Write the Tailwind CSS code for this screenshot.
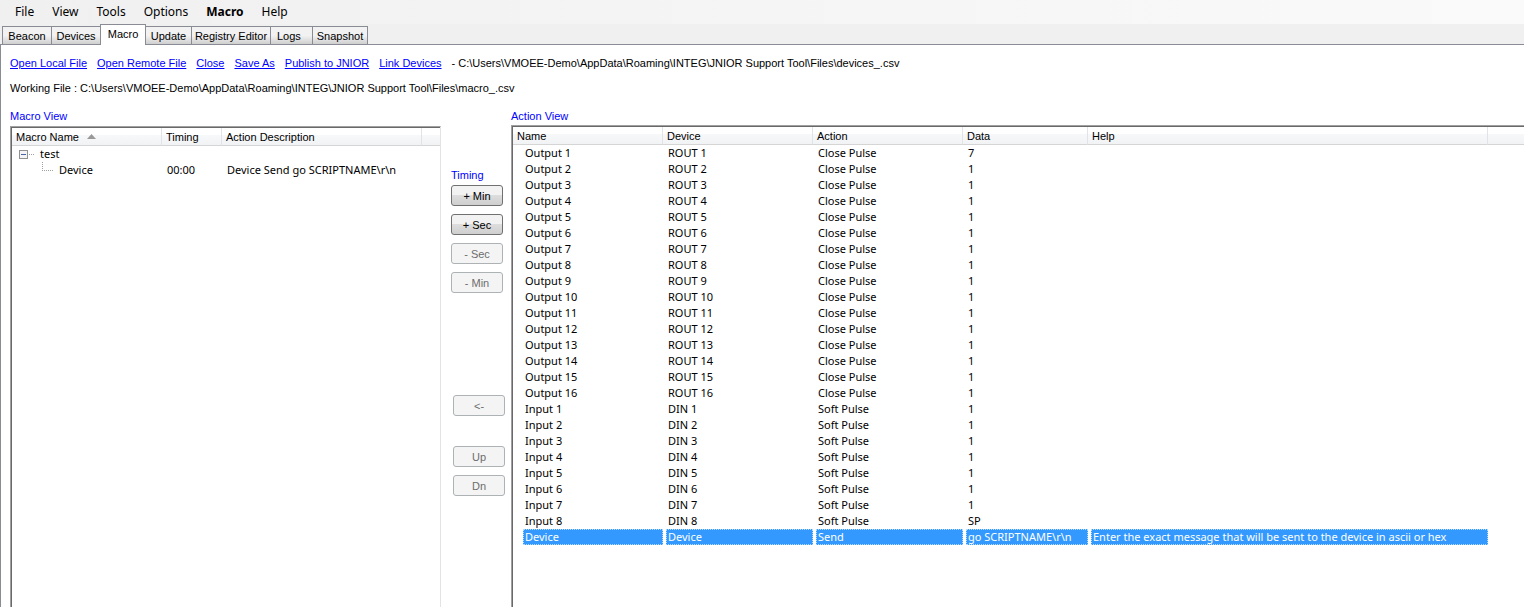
<!DOCTYPE html>
<html lang="en">
<head>
  <meta charset="UTF-8" />
  <meta name="viewport" content="width=device-width, initial-scale=1.0"/>
  <title>JNIOR Support Tool</title>
  <script src="https://cdn.jsdelivr.net/npm/@tailwindcss/browser@4"></script>
</head>
<body class="flex min-h-screen flex-col bg-[#f0f0f0] font-['Liberation_Sans',Arial,sans-serif] text-[11px] leading-4 text-black">

  <!-- Menu bar -->
  <nav class="flex h-6 items-center gap-[18px] bg-linear-to-r from-[#f0f0f0] to-[#fafafa] pl-[15px] font-['Noto_Sans',sans-serif] text-xs">
    <button>File</button>
    <button>View</button>
    <button>Tools</button>
    <button>Options</button>
    <button class="font-bold">Macro</button>
    <button>Help</button>
  </nav>

  <!-- Tabs -->
  <div class="flex h-[21px] items-end border-b border-[#898c95] pl-[2px]" role="tablist">
    <button role="tab" class="h-[18px] w-[50px] border border-b-0 border-[#898c95] bg-linear-to-b from-[#f2f2f2] from-50% to-[#cfcfcf]">Beacon</button>
    <button role="tab" class="h-[18px] w-12 border border-x-0 border-b-0 border-[#898c95] bg-linear-to-b from-[#f2f2f2] from-50% to-[#cfcfcf]">Devices</button>
    <button role="tab" aria-selected="true" class="-mb-px h-[21px] w-[46px] border border-b-0 border-[#898c95] bg-white pb-[2px]">Macro</button>
    <button role="tab" class="h-[18px] w-[46px] border border-b-0 border-l-0 border-[#898c95] bg-linear-to-b from-[#f2f2f2] from-50% to-[#cfcfcf]">Update</button>
    <button role="tab" class="h-[18px] w-[79px] border border-b-0 border-l-0 border-[#898c95] bg-linear-to-b from-[#f2f2f2] from-50% to-[#cfcfcf]">Registry Editor</button>
    <button role="tab" class="h-[18px] w-[42px] border border-b-0 border-l-0 border-[#898c95] bg-linear-to-b from-[#f2f2f2] from-50% to-[#cfcfcf] pl-[6px] text-left">Logs</button>
    <button role="tab" class="h-[18px] w-[55px] border border-b-0 border-l-0 border-[#898c95] bg-linear-to-b from-[#f2f2f2] from-50% to-[#cfcfcf]">Snapshot</button>
  </div>

  <main class="flex flex-1 flex-col border-l border-[#898c95] bg-white">
    <div class="flex gap-[10px] pt-[10px] pl-[9px] whitespace-nowrap">
      <a href="#" class="text-[#0000ff] underline">Open Local File</a>
      <a href="#" class="text-[#0000ff] underline">Open Remote File</a>
      <a href="#" class="text-[#0000ff] underline">Close</a>
      <a href="#" class="text-[#0000ff] underline">Save As</a>
      <a href="#" class="text-[#0000ff] underline">Publish to JNIOR</a>
      <a href="#" class="text-[#0000ff] underline">Link Devices</a>
      <span>- C:\Users\VMOEE-Demo\AppData\Roaming\INTEG\JNIOR Support Tool\Files\devices_.csv</span>
    </div>
    <p class="pt-[9px] pl-[9px] whitespace-nowrap">Working File : C:\Users\VMOEE-Demo\AppData\Roaming\INTEG\JNIOR Support Tool\Files\macro_.csv</p>

    <div class="flex flex-1 pt-3 pl-[9px]">
      <!-- Macro view -->
      <section class="flex w-[431px] shrink-0 flex-col">
        <h2 class="h-[18px] text-[#0000ff]">Macro View</h2>
        <div class="flex flex-1 border-t border-r border-l border-t-[#a0a0a0] border-r-[#e3e3e3] border-l-[#a0a0a0]">
          <div class="flex-1 border-t border-l border-[#696969]">
            <table class="w-full table-fixed border-separate border-spacing-0 text-left">
              <colgroup>
                <col class="w-[150px]"><col class="w-[60px]"><col class="w-[200px]"><col>
              </colgroup>
              <thead class="bg-linear-to-b from-white from-40% via-[#f7f8fa] via-40% to-[#f1f2f4]">
                <tr class="h-[18px]">
                  <th class="border-r border-b border-r-[#e0e3e8] border-b-[#d5d5d5] p-0 pl-1 font-normal">
                    <div class="flex items-center gap-2">Macro Name
                      <svg class="h-[5px] w-[9px]" viewBox="0 0 9 5"><path d="M4.500 0L9 5H0z" fill="#999"/></svg>
                    </div>
                  </th>
                  <th class="border-r border-b border-r-[#e0e3e8] border-b-[#d5d5d5] p-0 pl-1 font-normal">Timing</th>
                  <th class="border-r border-b border-r-[#e0e3e8] border-b-[#d5d5d5] p-0 pl-1 font-normal">Action Description</th>
                  <th class="border-b border-[#d5d5d5] p-0"></th>
                </tr>
              </thead>
              <tbody class="font-['Noto_Sans',sans-serif]">
                <tr class="h-4">
                  <td class="p-0">
                    <div class="flex h-4 items-center pl-[7px]">
                      <svg class="h-[9px] w-[15px]" viewBox="0 0 15 9" shape-rendering="crispEdges">
                        <rect x=".5" y=".5" width="8" height="8" fill="#f4f4f4" stroke="#919191"/>
                        <path d="M2 4.500h5" stroke="#4b63a7"/>
                        <path d="M10 4.500h5" stroke="#a0a0a0" stroke-dasharray="1 1"/>
                      </svg>
                      <span class="pl-[6px]">test</span>
                    </div>
                  </td>
                  <td class="p-0"></td><td class="p-0"></td><td class="p-0"></td>
                </tr>
                <tr class="h-4">
                  <td class="p-0">
                    <div class="flex h-4 pl-[30px]">
                      <svg class="h-[9px] w-[11px]" viewBox="0 0 11 9" shape-rendering="crispEdges">
                        <path d="M.5 0v8M0 8.500h11" stroke="#a0a0a0" stroke-dasharray="1 1" fill="none"/>
                      </svg>
                      <span class="pl-[6px]">Device</span>
                    </div>
                  </td>
                  <td class="p-0 pl-[5px]">00:00</td>
                  <td class="p-0 pl-[5px]">Device Send go SCRIPTNAME\r\n</td>
                  <td class="p-0"></td>
                </tr>
              </tbody>
            </table>
          </div>
        </div>
      </section>

      <!-- Timing and order controls -->
      <section class="w-[70px] shrink-0 pt-[59px] pl-[10px]">
        <h2 class="text-[#0000ff]">Timing</h2>
        <div class="flex flex-col gap-2 pt-[2px]">
          <button class="h-[21px] w-[52px] rounded-[3px] border border-[#707070] bg-linear-to-b from-[#f2f2f2] from-50% via-[#dddddd] via-50% to-[#cfcfcf]">+ Min</button>
          <button class="h-[21px] w-[52px] rounded-[3px] border border-[#707070] bg-linear-to-b from-[#f2f2f2] from-50% via-[#dddddd] via-50% to-[#cfcfcf]">+ Sec</button>
          <button disabled class="h-[21px] w-[52px] rounded-[3px] border border-[#adb2b5] bg-[#f4f4f4] text-[#6d6d6d]">- Sec</button>
          <button disabled class="h-[21px] w-[52px] rounded-[3px] border border-[#adb2b5] bg-[#f4f4f4] text-[#6d6d6d]">- Min</button>
        </div>
        <div class="pt-[102px] pl-[2px]">
          <button disabled class="block h-[21px] w-[52px] rounded-[3px] border border-[#adb2b5] bg-[#f4f4f4] text-[#6d6d6d]">&lt;-</button>
        </div>
        <div class="flex flex-col gap-2 pt-[30px] pl-[2px]">
          <button disabled class="h-[21px] w-[52px] rounded-[3px] border border-[#adb2b5] bg-[#f4f4f4] text-[#6d6d6d]">Up</button>
          <button disabled class="h-[21px] w-[52px] rounded-[3px] border border-[#adb2b5] bg-[#f4f4f4] text-[#6d6d6d]">Dn</button>
        </div>
      </section>

      <!-- Action view -->
      <section class="flex min-w-0 flex-1 flex-col">
        <h2 class="h-[17px] text-[#0000ff]">Action View</h2>
        <div class="flex flex-1 border-t border-l border-[#a0a0a0]">
          <div class="flex-1 border-t border-l border-[#696969]">
            <table class="w-full table-fixed border-separate border-spacing-0 text-left">
              <colgroup>
                <col class="w-[150px]"><col class="w-[150px]"><col class="w-[150px]"><col class="w-[125px]"><col class="w-[400px]"><col>
              </colgroup>
              <thead class="bg-linear-to-b from-white from-40% via-[#f7f8fa] via-40% to-[#f1f2f4]">
                <tr class="h-[18px]">
                  <th class="border-r border-b border-r-[#e0e3e8] border-b-[#d5d5d5] p-0 pl-1 font-normal">Name</th>
                  <th class="border-r border-b border-r-[#e0e3e8] border-b-[#d5d5d5] p-0 pl-1 font-normal">Device</th>
                  <th class="border-r border-b border-r-[#e0e3e8] border-b-[#d5d5d5] p-0 pl-1 font-normal">Action</th>
                  <th class="border-r border-b border-r-[#e0e3e8] border-b-[#d5d5d5] p-0 pl-1 font-normal">Data</th>
                  <th class="border-r border-b border-r-[#e0e3e8] border-b-[#d5d5d5] p-0 pl-1 font-normal">Help</th>
                  <th class="border-b border-[#d5d5d5] p-0"></th>
                </tr>
              </thead>
              <tbody id="actions" class="font-['Noto_Sans',sans-serif]"></tbody>
            </table>
          </div>
        </div>
      </section>
    </div>
  </main>

  <script>
    const rows = [];
    for (let i = 1; i <= 16; i++) {
      rows.push(["Output " + i, "ROUT " + i, "Close Pulse", i === 1 ? "7" : "1", ""]);
    }
    for (let i = 1; i <= 8; i++) {
      rows.push(["Input " + i, "DIN " + i, "Soft Pulse", i === 8 ? "SP" : "1", ""]);
    }
    rows.push(["Device", "Device", "Send", "go SCRIPTNAME\\r\\n", "Enter the exact message that will be sent to the device in ascii or hex"]);

    const normal = "h-4 whitespace-nowrap pl-[2px]";
    const selected = "h-4 whitespace-nowrap bg-[#3399ff] pl-[2px] text-white outline outline-dotted outline-[#b5dcff] -outline-offset-1";

    document.getElementById("actions").innerHTML = rows.map((row, r) => {
      const style = r === rows.length - 1 ? selected : normal;
      const cells = row.map((text, c) =>
        `<td class="${c === 0 ? "p-0 pl-[10px]" : "p-0 pl-[3px]"}"><div class="${style}">${text}</div></td>`
      ).join("");
      return `<tr>${cells}<td class="p-0"></td></tr>`;
    }).join("");
  </script>
</body>
</html>
